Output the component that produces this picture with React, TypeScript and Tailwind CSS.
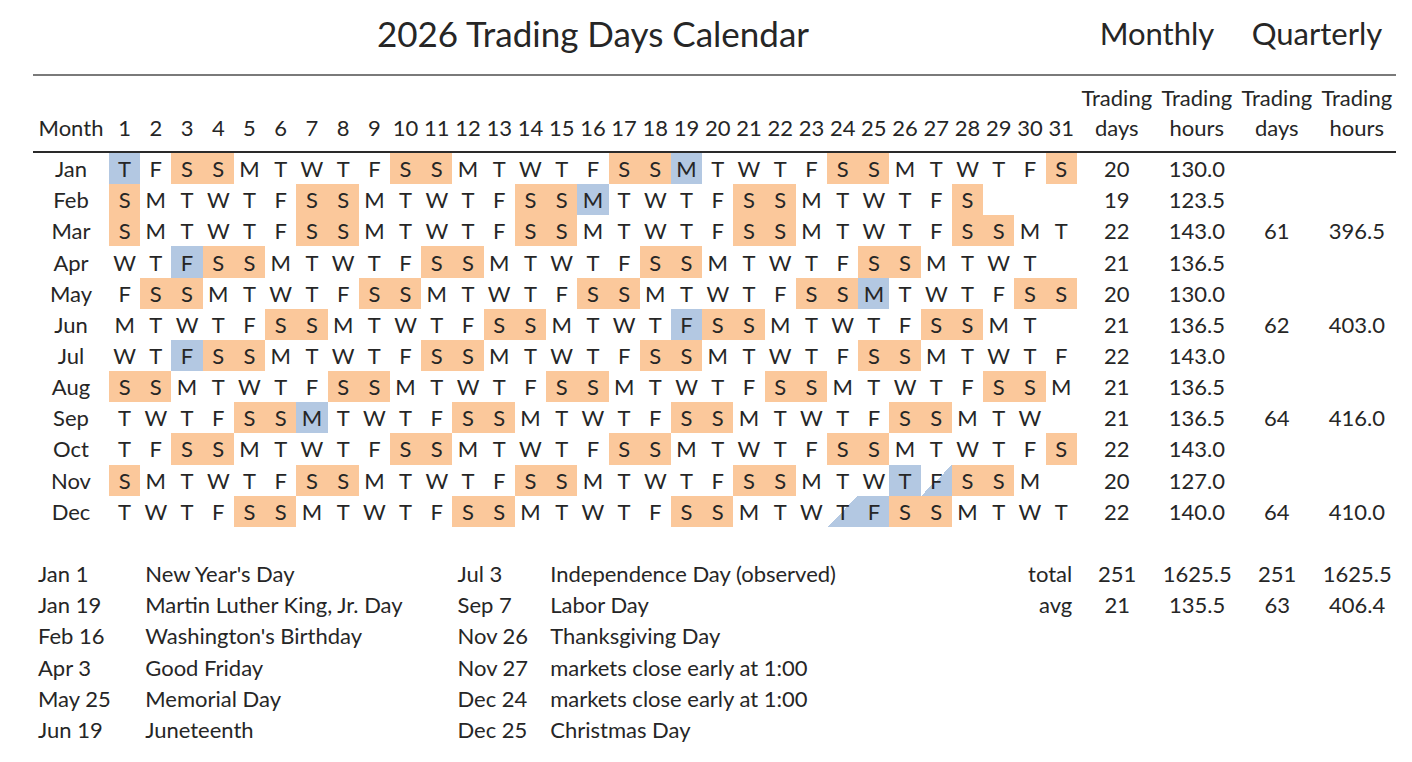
import React from 'react';

// --- DATA ---
const MONTHS = ['Jan', 'Feb', 'Mar', 'Apr', 'May', 'Jun', 'Jul', 'Aug', 'Sep', 'Oct', 'Nov', 'Dec'];
const LETTERS = ['S', 'M', 'T', 'W', 'T', 'F', 'S'];
const MONTH_DAYS = [20, 19, 22, 21, 20, 21, 22, 21, 21, 22, 20, 22];
const MONTH_HOURS = ['130.0', '123.5', '143.0', '136.5', '130.0', '136.5', '143.0', '136.5', '136.5', '143.0', '127.0', '140.0'];
const QUARTERS: Record<number, [string, string]> = { 2: ['61', '396.5'], 5: ['62', '403.0'], 8: ['64', '416.0'], 11: ['64', '410.0'] };

// "month-day" -> full holiday or early close (half)
const HOLIDAYS: Record<string, 'full' | 'half'> = {
  '0-1': 'full', '0-19': 'full', '1-16': 'full', '3-3': 'full', '4-25': 'full', '5-19': 'full',
  '6-3': 'full', '8-7': 'full', '10-26': 'full', '10-27': 'half', '11-24': 'half', '11-25': 'full',
};

const FOOTER = [
  ['Jan 1', "New Year's Day", 'Jul 3', 'Independence Day (observed)'],
  ['Jan 19', 'Martin Luther King, Jr. Day', 'Sep 7', 'Labor Day'],
  ['Feb 16', "Washington's Birthday", 'Nov 26', 'Thanksgiving Day'],
  ['Apr 3', 'Good Friday', 'Nov 27', 'markets close early at 1:00'],
  ['May 25', 'Memorial Day', 'Dec 24', 'markets close early at 1:00'],
  ['Jun 19', 'Juneteenth', 'Dec 25', 'Christmas Day'],
];
const TOTALS: Record<number, string[]> = {
  0: ['total', '251', '1625.5', '251', '1625.5'],
  1: ['avg', '21', '135.5', '63', '406.4'],
};

const daysIn = (m: number) => new Date(2026, m + 1, 0).getDate();

const DayCell = ({ m, d }: { m: number; d: number }) => {
  if (d > daysIn(m)) return <div className="w-[31.23px] shrink-0" />;
  const dow = new Date(2026, m, d).getDay();
  const hol = HOLIDAYS[`${m}-${d}`];
  let bg = '';
  if (hol === 'full') bg = 'bg-[#b3c8e2]';
  else if (hol === 'half') bg = 'bg-[linear-gradient(to_bottom_right,transparent_50%,#b3c8e2_50%)]';
  else if (dow === 0 || dow === 6) bg = 'bg-[#fbc89b]';
  return (
    <div className={`w-[31.23px] shrink-0 h-full flex items-center justify-center ${bg}`}>
      {LETTERS[dow]}
    </div>
  );
};

const App: React.FC = () => {
  const days = Array.from({ length: 31 }, (_, i) => i + 1);

  return (
    <div className="w-[1412px] h-[762px] bg-white text-[#262626] font-['Lato',sans-serif] text-[22px] overflow-hidden">
      <div className="ml-[33px] w-[1363px]">
        {/* Title */}
        <div className="flex h-[74px] leading-[66px] text-[35px]">
          <div className="w-[76px] shrink-0" />
          <div className="w-[968px] shrink-0 text-center">2026 Trading Days Calendar</div>
          <div className="w-[160px] shrink-0 text-center text-[31px]">Monthly</div>
          <div className="w-[160px] shrink-0 text-center text-[31px]">Quarterly</div>
        </div>
        <div className="h-[2px] bg-[#7a7a7a]" />

        {/* Header */}
        <div className="flex items-end h-[75px] pb-[8px] leading-[30px]">
          <div className="w-[76px] shrink-0 text-center">Month</div>
          {days.map(d => (
            <div key={d} className="w-[31.23px] shrink-0 text-center">{d}</div>
          ))}
          {['days', 'hours', 'days', 'hours'].map((w, i) => (
            <div key={i} className="w-[80px] shrink-0 text-center">
              <div>Trading</div>
              <div>{w}</div>
            </div>
          ))}
        </div>
        <div className="h-[2px] bg-[#2a2a2a]" />

        {/* Months */}
        {MONTHS.map((name, m) => (
          <div key={name} className="flex h-[31.17px] items-center">
            <div className="w-[76px] shrink-0 text-center">{name}</div>
            {days.map(d => <DayCell key={d} m={m} d={d} />)}
            <div className="w-[80px] shrink-0 text-center">{MONTH_DAYS[m]}</div>
            <div className="w-[80px] shrink-0 text-center">{MONTH_HOURS[m]}</div>
            <div className="w-[80px] shrink-0 text-center">{QUARTERS[m]?.[0]}</div>
            <div className="w-[80px] shrink-0 text-center">{QUARTERS[m]?.[1]}</div>
          </div>
        ))}

        <div className="h-[31.17px]" />

        {/* Holidays + totals */}
        {FOOTER.map((row, i) => (
          <div key={i} className="flex h-[31.17px] items-center whitespace-nowrap">
            <div className="w-[107.23px] shrink-0 pl-[5px]">{row[0]}</div>
            <div className="w-[312.3px] shrink-0 pl-[5px]">{row[1]}</div>
            <div className="w-[93.7px] shrink-0 pl-[5px]">{row[2]}</div>
            <div className="w-[531px] shrink-0 pl-[4px] pr-[5px] flex justify-between">
              <span>{row[3]}</span>
              <span>{TOTALS[i]?.[0]}</span>
            </div>
            {[1, 2, 3, 4].map(k => (
              <div key={k} className="w-[80px] shrink-0 text-center">{TOTALS[i]?.[k]}</div>
            ))}
          </div>
        ))}
      </div>
    </div>
  );
};

export default App;
